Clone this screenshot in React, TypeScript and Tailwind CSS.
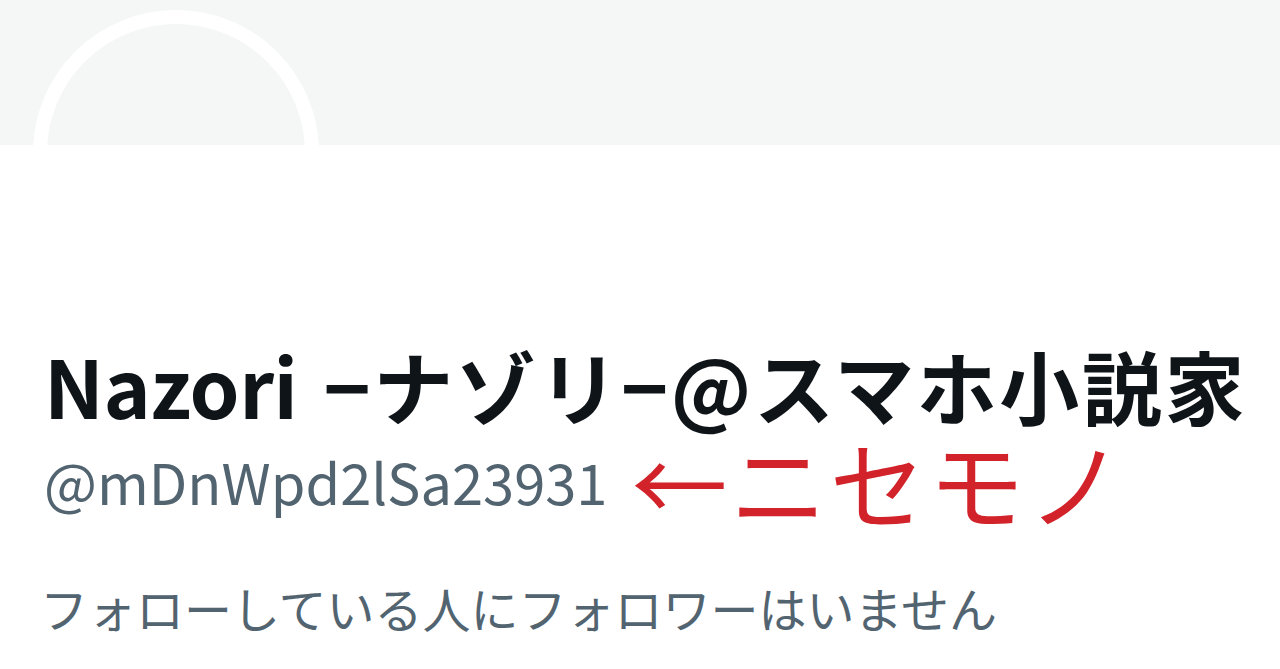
export default function App() {
  return (
    <div className="w-[1280px] h-[669px] bg-white overflow-hidden" style={{ fontFamily: '"Noto Sans CJK JP", "Noto Sans", sans-serif' }}>
      <div className="relative h-[145px] bg-[#f5f7f7] overflow-hidden">
        <div className="absolute left-[33px] top-[10px] w-[286px] h-[286px] rounded-full border-[14px] border-white bg-[#f5f7f7]" />
      </div>
      <div className="pl-[44px]">
        <div className="mt-[196px] h-[86px] flex items-center text-[80px] font-bold text-[#0f1419] leading-none whitespace-nowrap">
          <span className="tracking-[-0.5px]">Nazori</span>
          <span className="ml-[26px] tracking-[2.6px]">−ナゾリ−@スマホ小説家</span>
        </div>
        <div className="mt-[4px] h-[100px] flex items-center whitespace-nowrap">
          <span className="text-[56px] text-[#536471] leading-none">@mDnWpd2lSa23931</span>
          <span className="ml-[24px] text-[96px] text-[#d2232a] leading-[0.9] tracking-[3px]">←ニセモノ</span>
        </div>
        <div className="mt-[52px] -ml-[4px] text-[48px] text-[#536471] leading-none whitespace-nowrap">
          フォローしている人にフォロワーはいません
        </div>
      </div>
    </div>
  );
}
